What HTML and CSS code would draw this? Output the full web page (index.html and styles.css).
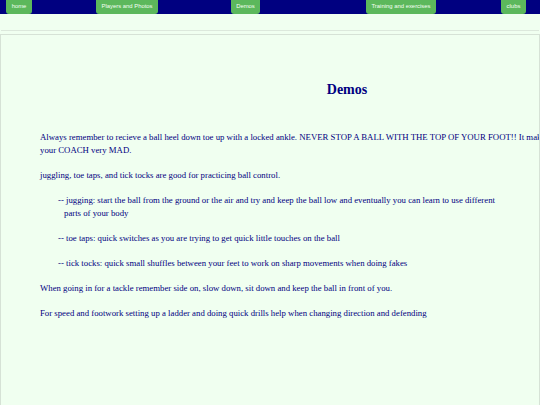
FILE: index.html
```html
<!DOCTYPE html>
<html>
<head>
<meta charset="utf-8">
<link rel="stylesheet" href="styles.css">
</head>
<body>
<nav class="topnav">
  <a class="btn btn-home" href="#">home</a>
  <a class="btn btn-players" href="#">Players and Photos</a>
  <a class="btn btn-demos" href="#">Demos</a>
  <a class="btn btn-training" href="#">Training and exercises</a>
  <a class="btn btn-clubs" href="#">clubs</a>
</nav>
<div class="strip"></div>
<main class="frame">
  <div class="content">
    <h2 class="title">Demos</h2>
    <p>Always remember to recieve a ball heel down toe up with a locked ankle. NEVER STOP A BALL WITH THE TOP OF YOUR FOOT!! It makes your COACH very MAD.</p>
    <p>juggling, toe taps, and tick tocks are good for practicing ball control.</p>
    <div class="drills">
      <p>-- jugging: start the ball from the ground or the air and try and keep the ball low and eventually you can learn to use different parts of your body</p>
      <p>-- toe taps: quick switches as you are trying to get quick little touches on the ball</p>
      <p>-- tick tocks: quick small shuffles between your feet to work on sharp movements when doing fakes</p>
    </div>
    <p>When going in for a tackle remember side on, slow down, sit down and keep the ball in front of you.</p>
    <p>For speed and footwork setting up a ladder and doing quick drills help when changing direction and defending</p>
  </div>
</main>
</body>
</html>
```
FILE: styles.css
```css
html, body {
  margin: 0;
  padding: 0;
  height: 100%;
  overflow: hidden;
  background: #f0fff0;
}
body {
  font-family: "Liberation Serif", "Times New Roman", serif;
  color: #000080;
  display: flex;
  flex-direction: column;
}
.topnav {
  flex: none;
  height: 14px;
  background: #000080;
  display: flex;
  align-items: flex-start;
}
.btn {
  display: block;
  height: 14px;
  line-height: 13px;
  padding: 0;
  text-align: center;
  white-space: nowrap;
  background: #5cb85c;
  color: #f4fff4;
  font-family: "Liberation Sans", Arial, sans-serif;
  font-size: 5.9px;
  text-decoration: none;
  border-radius: 0 0 3px 3px;
  box-sizing: border-box;
}
.btn-home { margin-left: 6px; width: 26px; }
.btn-players { margin-left: 64px; width: 62px; }
.btn-demos { margin-left: 73px; width: 29px; }
.btn-training { margin-left: 106px; width: 70px; }
.btn-clubs { margin-left: 65px; width: 25px; }
.strip {
  flex: none;
  height: 16px;
  margin: 0 1px;
  border-bottom: 1px solid #dce8dc;
  background: #f0fff0;
}
.frame {
  flex: 1;
  min-height: 0;
  overflow: hidden;
  margin-top: 3px;
  border: 1px solid #d6e2d6;
  border-bottom: none;
  box-sizing: border-box;
}
.content {
  width: 522px;
  padding: 48px 0 0 39px;
  font-size: 8.75px;
  line-height: 13px;
}
.title {
  margin: 0 0 35px 0;
  padding-left: 92px;
  text-align: center;
  font-size: 14px;
  line-height: 13px;
  font-weight: bold;
}
.content p {
  margin: 0 0 12px 0;
}
.drills {
  width: 450px;
  margin-left: 18px;
}
.drills p {
  padding-left: 6px;
  text-indent: -6px;
}
```
